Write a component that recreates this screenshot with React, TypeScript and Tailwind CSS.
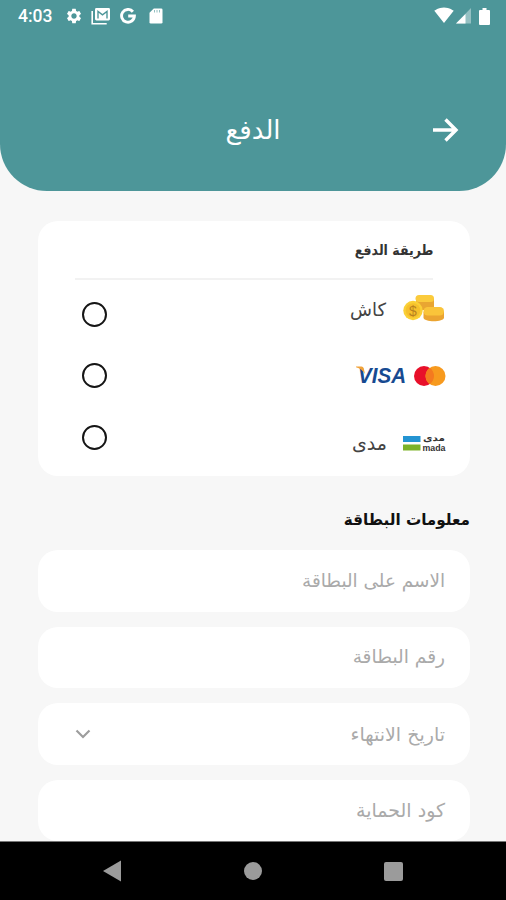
import React from 'react';
import { MdSettings, MdSignalWifi4Bar } from 'react-icons/md';

const fields = [
  { id: 'name', label: 'الاسم على البطاقة', size: 'text-[18.4px]', select: false },
  { id: 'number', label: 'رقم البطاقة', size: 'text-[18.6px]', select: false },
  { id: 'expiry', label: 'تاريخ الانتهاء', size: 'text-[19px]', select: true },
  { id: 'cvv', label: 'كود الحماية', size: 'text-[19px]', select: false },
];

function StatusBar() {
  return (
    <div className="h-8 flex items-center justify-between pl-[18px] pr-4 text-white" dir="ltr">
      <div className="flex items-center">
        <span className="w-[35px] pt-0.5 font-[Roboto] text-[17.5px] font-medium leading-none">4:03</span>
        <MdSettings className="ml-3 w-[18px] h-[18px]" />
        <svg className="ml-2 w-[20px] h-[18px]" viewBox="0 0 20 18" fill="none">
          <path d="M1.200 4v12.800h14.500" stroke="#fff" strokeWidth="1.6" />
          <rect x="4" y="1" width="15" height="12.500" rx="1.400" fill="#fff" />
          <path d="M7 11.500V4.500l4.500 3.300L16 4.500v7" stroke="#4d9699" strokeWidth="1.4" />
        </svg>
        <svg className="ml-[9px] w-4 h-4" viewBox="0 0 16 16" fill="none">
          <path d="M12.900 3.700A6.400 6.400 0 1 0 14.400 8H8.200" stroke="#fff" strokeWidth="2.9" />
        </svg>
        <svg className="ml-[13px] w-[14px] h-4" viewBox="0 0 14 16">
          <path d="M4.800 .5h7.400a1.300 1.300 0 0 1 1.300 1.300v12.400a1.300 1.300 0 0 1-1.300 1.300H1.800A1.300 1.300 0 0 1 .5 14.200V4.800z" fill="#fff" />
          <path d="M5.500 2v2.500M8 2v2.500M10.500 2v2.500" stroke="#4d9699" strokeWidth="1" opacity=".6" />
        </svg>
      </div>
      <div className="flex items-center">
        <MdSignalWifi4Bar className="w-5 h-5 -mt-0.5" />
        <svg className="ml-[2px] w-[15px] h-4" viewBox="0 0 15 16">
          <path d="M15 0v15.500H0z" fill="#fff" opacity=".4" />
          <path d="M9.500 6v9.500H0z" fill="#fff" />
        </svg>
        <svg className="ml-2 w-[11px] h-[17px]" viewBox="0 0 11 17">
          <path d="M3.500 0h4v2H10q1 0 1 1v13q0 1-1 1H1q-1 0-1-1V3q0-1 1-1h2.500z" fill="#fff" />
        </svg>
      </div>
    </div>
  );
}

function CoinsIcon() {
  return (
    <svg className="w-[43px] h-[30px]" viewBox="0 0 43 30">
      <path d="M13 4.500V16h18V4.500z" fill="#e9a632" />
      <rect x="12.500" y="1" width="18.500" height="7" rx="3.500" fill="#fbcb3c" />
      <path d="M20.500 18v5.500c0 5 20.500 5 20.500 0V18z" fill="#eba431" />
      <rect x="20.500" y="13" width="20.500" height="8.500" rx="4.200" fill="#fac43a" />
      <circle cx="10" cy="16.500" r="9.700" fill="#fad037" />
      <circle cx="10" cy="16.500" r="7.300" fill="#f6c02c" />
      <text x="10" y="21.500" textAnchor="middle" direction="ltr" fontFamily="Liberation Sans" fontSize="14" fill="#b9821f">$</text>
    </svg>
  );
}

function CardLogos() {
  return (
    <svg className="w-[91px] h-7 overflow-visible" viewBox="0 -3 91 28" direction="ltr">
      <text x="3" y="19" textLength="48" lengthAdjust="spacingAndGlyphs" fontFamily="Liberation Sans" fontSize="22.5" fontWeight="bold" fontStyle="italic" fill="#174a91">VISA</text>
      <path d="M1 2.500h5.500q1.800 0 2.300 2l1.200 5.500Q7 5 1 3.200z" fill="#f2a33a" />
      <circle cx="69" cy="12" r="10" fill="#e8102a" />
      <circle cx="80.500" cy="12" r="10" fill="#f79a1e" />
      <path d="M74.750 3.800a10 10 0 0 1 0 16.400a10 10 0 0 1 0-16.400z" fill="#f47a1f" />
    </svg>
  );
}

function MadaLogo() {
  return (
    <svg className="w-[43px] h-[18px] overflow-visible" viewBox="0 0 43 18">
      <path d="M0 2h17.500v6H0z" fill="#2494d2" />
      <path d="M0 10.500h17.500v6H0z" fill="#7cb228" />
      <text x="42" y="7" direction="rtl" textLength="22" lengthAdjust="spacingAndGlyphs" fontFamily="DejaVu Sans" fontSize="9" fontWeight="bold" fill="#333">مدى</text>
      <text x="19.500" y="16.500" direction="ltr" textLength="23" lengthAdjust="spacingAndGlyphs" fontFamily="Liberation Sans" fontSize="9" fontWeight="bold" fill="#333">mada</text>
    </svg>
  );
}

export default function App() {
  return (
    <div className="w-[506px] h-[900px] flex flex-col overflow-hidden bg-[#f7f7f7] font-['DejaVu_Sans',sans-serif]" dir="rtl">
      <header className="h-[190.5px] shrink-0 bg-[#4d9699] rounded-b-[47px] text-white">
        <StatusBar />
        <div className="mt-[78px] h-10 px-[47px] flex items-center justify-between">
          <svg className="w-7 h-7" viewBox="0 0 28 28" fill="none" stroke="#fff" strokeWidth="3.4">
            <path d="M2 14h23M14.500 3.500 25 14 14.500 24.500" />
          </svg>
          <h1 className="text-[26px] leading-10">الدفع</h1>
          <span className="w-7" />
        </div>
      </header>

      <main className="flex-1 min-h-0 overflow-hidden pr-9 pl-[38px] pt-[30.5px]">
        {/* Payment methods */}
        <section className="h-[255px] bg-white rounded-[20px]">
          <div className="mx-[37px] h-[59px] pt-0.5 border-b-2 border-[#f2f2f2] flex items-center">
            <h2 className="origin-right scale-x-90 text-[14px] font-bold text-[#333]">طريقة الدفع</h2>
          </div>
          <div className="flex justify-between pr-6 pl-[44px]">
            <div>
              <div className="h-[58px] flex items-center gap-[17px]">
                <CoinsIcon />
                <span className="text-[18px] text-[#444]">كاش</span>
              </div>
              <div className="h-[74px] flex items-center">
                <CardLogos />
              </div>
              <div className="h-[62px] flex items-center gap-4">
                <MadaLogo />
                <span className="text-[19px] text-[#444]">مدى</span>
              </div>
            </div>
            <div className="pt-[21.5px] flex flex-col gap-[36.5px]">
              <button className="w-[25px] h-[25px] rounded-full border-2 border-[#151515]" />
              <button className="w-[25px] h-[25px] rounded-full border-2 border-[#151515]" />
              <button className="w-[25px] h-[25px] rounded-full border-2 border-[#151515]" />
            </div>
          </div>
        </section>

        {/* Card info */}
        <h2 className="mt-[30px] h-7 leading-7 origin-right scale-x-95 text-[16px] font-bold text-[#111]">معلومات البطاقة</h2>
        <div className="mt-4 flex flex-col gap-[15px]">
          {fields.map(field => (
            <div key={field.id} className="h-[61.5px] pr-[25px] pl-[37px] bg-white rounded-[20px] flex items-center justify-between text-[#aaa]">
              <span className={field.size}>{field.label}</span>
              {field.select && (
                <svg className="w-4 h-[10px]" viewBox="0 0 16 10" fill="none">
                  <path d="M1.500 1.500 8 8l6.500-6.500" stroke="#9d9d9d" strokeWidth="2.2" />
                </svg>
              )}
            </div>
          ))}
        </div>
      </main>

      <nav className="h-[59px] shrink-0 bg-black border-t border-[#777] flex items-center justify-between pl-[102px] pr-[103px]" dir="ltr">
        <svg className="w-5 h-[22px]" viewBox="0 0 20 22"><path d="M1 11 19 .500v21z" fill="#9b9b9b" /></svg>
        <span className="w-[18px] h-[18px] rounded-full bg-[#9b9b9b]" />
        <span className="w-[19px] h-[19px] rounded-[2px] bg-[#9b9b9b]" />
      </nav>
    </div>
  );
}
